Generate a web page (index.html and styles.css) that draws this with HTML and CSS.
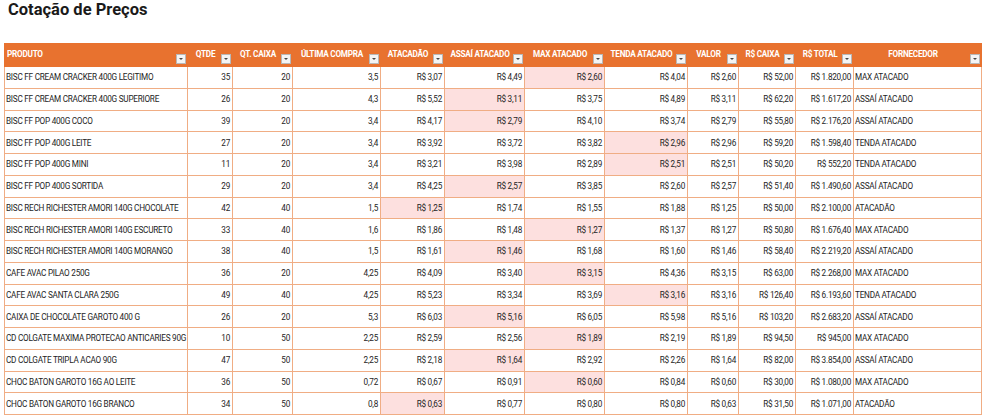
FILE: index.html
```html
<!DOCTYPE html>
<html lang="pt-BR">
<head>
<meta charset="utf-8">
<title>Cotação de Preços</title>
<link rel="stylesheet" href="styles.css">
</head>
<body>
<h1 class="title">Cotação de Preços</h1>
<table class="grid">
<colgroup>
<col style="width:183px"><col style="width:45px"><col style="width:60px"><col style="width:88px"><col style="width:64px"><col style="width:80px"><col style="width:80px"><col style="width:83px"><col style="width:51px"><col style="width:57px"><col style="width:58px"><col style="width:128px">
</colgroup>
<thead>
<tr>
<th class="left"><div class="hc"><span class="ht">PRODUTO</span><span class="dd"></span></div></th>
<th><div class="hc"><span class="ht">QTDE</span><span class="dd"></span></div></th>
<th><div class="hc"><span class="ht">QT. CAIXA</span><span class="dd"></span></div></th>
<th><div class="hc"><span class="ht">ÚLTIMA COMPRA</span><span class="dd"></span></div></th>
<th><div class="hc"><span class="ht">ATACADÃO</span><span class="dd"></span></div></th>
<th><div class="hc"><span class="ht">ASSAÍ ATACADO</span><span class="dd"></span></div></th>
<th><div class="hc"><span class="ht">MAX ATACADO</span><span class="dd"></span></div></th>
<th><div class="hc"><span class="ht">TENDA ATACADO</span><span class="dd"></span></div></th>
<th><div class="hc"><span class="ht">VALOR</span><span class="dd"></span></div></th>
<th><div class="hc"><span class="ht">R$ CAIXA</span><span class="dd"></span></div></th>
<th><div class="hc"><span class="ht">R$ TOTAL</span><span class="dd"></span></div></th>
<th><div class="hc"><span class="ht">FORNECEDOR</span><span class="dd"></span></div></th>
</tr>
</thead>
<tbody>
<tr><td class="t">BISC FF CREAM CRACKER 400G LEGITIMO</td><td>35</td><td>20</td><td>3,5</td><td>R$ 3,07</td><td>R$ 4,49</td><td class="hl">R$ 2,60</td><td>R$ 4,04</td><td>R$ 2,60</td><td>R$ 52,00</td><td>R$ 1.820,00</td><td class="t">MAX ATACADO</td></tr>
<tr><td class="t">BISC FF CREAM CRACKER 400G SUPERIORE</td><td>26</td><td>20</td><td>4,3</td><td>R$ 5,52</td><td class="hl">R$ 3,11</td><td>R$ 3,75</td><td>R$ 4,89</td><td>R$ 3,11</td><td>R$ 62,20</td><td>R$ 1.617,20</td><td class="t">ASSAÍ ATACADO</td></tr>
<tr><td class="t">BISC FF POP 400G COCO</td><td>39</td><td>20</td><td>3,4</td><td>R$ 4,17</td><td class="hl">R$ 2,79</td><td>R$ 4,10</td><td>R$ 3,74</td><td>R$ 2,79</td><td>R$ 55,80</td><td>R$ 2.176,20</td><td class="t">ASSAÍ ATACADO</td></tr>
<tr><td class="t">BISC FF POP 400G LEITE</td><td>27</td><td>20</td><td>3,4</td><td>R$ 3,92</td><td>R$ 3,72</td><td>R$ 3,82</td><td class="hl">R$ 2,96</td><td>R$ 2,96</td><td>R$ 59,20</td><td>R$ 1.598,40</td><td class="t">TENDA ATACADO</td></tr>
<tr><td class="t">BISC FF POP 400G MINI</td><td>11</td><td>20</td><td>3,4</td><td>R$ 3,21</td><td>R$ 3,98</td><td>R$ 2,89</td><td class="hl">R$ 2,51</td><td>R$ 2,51</td><td>R$ 50,20</td><td>R$ 552,20</td><td class="t">TENDA ATACADO</td></tr>
<tr><td class="t">BISC FF POP 400G SORTIDA</td><td>29</td><td>20</td><td>3,4</td><td>R$ 4,25</td><td class="hl">R$ 2,57</td><td>R$ 3,85</td><td>R$ 2,60</td><td>R$ 2,57</td><td>R$ 51,40</td><td>R$ 1.490,60</td><td class="t">ASSAÍ ATACADO</td></tr>
<tr><td class="t">BISC RECH RICHESTER AMORI 140G CHOCOLATE</td><td>42</td><td>40</td><td>1,5</td><td class="hl">R$ 1,25</td><td>R$ 1,74</td><td>R$ 1,55</td><td>R$ 1,88</td><td>R$ 1,25</td><td>R$ 50,00</td><td>R$ 2.100,00</td><td class="t">ATACADÃO</td></tr>
<tr><td class="t">BISC RECH RICHESTER AMORI 140G ESCURETO</td><td>33</td><td>40</td><td>1,6</td><td>R$ 1,86</td><td>R$ 1,48</td><td class="hl">R$ 1,27</td><td>R$ 1,37</td><td>R$ 1,27</td><td>R$ 50,80</td><td>R$ 1.676,40</td><td class="t">MAX ATACADO</td></tr>
<tr><td class="t">BISC RECH RICHESTER AMORI 140G MORANGO</td><td>38</td><td>40</td><td>1,5</td><td>R$ 1,61</td><td class="hl">R$ 1,46</td><td>R$ 1,68</td><td>R$ 1,60</td><td>R$ 1,46</td><td>R$ 58,40</td><td>R$ 2.219,20</td><td class="t">ASSAÍ ATACADO</td></tr>
<tr><td class="t">CAFE AVAC PILAO 250G</td><td>36</td><td>20</td><td>4,25</td><td>R$ 4,09</td><td>R$ 3,40</td><td class="hl">R$ 3,15</td><td>R$ 4,36</td><td>R$ 3,15</td><td>R$ 63,00</td><td>R$ 2.268,00</td><td class="t">MAX ATACADO</td></tr>
<tr><td class="t">CAFE AVAC SANTA CLARA 250G</td><td>49</td><td>40</td><td>4,25</td><td>R$ 5,23</td><td>R$ 3,34</td><td>R$ 3,69</td><td class="hl">R$ 3,16</td><td>R$ 3,16</td><td>R$ 126,40</td><td>R$ 6.193,60</td><td class="t">TENDA ATACADO</td></tr>
<tr><td class="t">CAIXA DE CHOCOLATE GAROTO 400 G</td><td>26</td><td>20</td><td>5,3</td><td>R$ 6,03</td><td class="hl">R$ 5,16</td><td>R$ 6,05</td><td>R$ 5,98</td><td>R$ 5,16</td><td>R$ 103,20</td><td>R$ 2.683,20</td><td class="t">ASSAÍ ATACADO</td></tr>
<tr><td class="t">CD COLGATE MAXIMA PROTECAO ANTICARIES 90G</td><td>10</td><td>50</td><td>2,25</td><td>R$ 2,59</td><td>R$ 2,56</td><td class="hl">R$ 1,89</td><td>R$ 2,19</td><td>R$ 1,89</td><td>R$ 94,50</td><td>R$ 945,00</td><td class="t">MAX ATACADO</td></tr>
<tr><td class="t">CD COLGATE TRIPLA ACAO 90G</td><td>47</td><td>50</td><td>2,25</td><td>R$ 2,18</td><td class="hl">R$ 1,64</td><td>R$ 2,92</td><td>R$ 2,26</td><td>R$ 1,64</td><td>R$ 82,00</td><td>R$ 3.854,00</td><td class="t">ASSAÍ ATACADO</td></tr>
<tr><td class="t">CHOC BATON GAROTO 16G AO LEITE</td><td>36</td><td>50</td><td>0,72</td><td>R$ 0,67</td><td>R$ 0,91</td><td class="hl">R$ 0,60</td><td>R$ 0,84</td><td>R$ 0,60</td><td>R$ 30,00</td><td>R$ 1.080,00</td><td class="t">MAX ATACADO</td></tr>
<tr><td class="t">CHOC BATON GAROTO 16G BRANCO</td><td>34</td><td>50</td><td>0,8</td><td class="hl">R$ 0,63</td><td>R$ 0,77</td><td>R$ 0,80</td><td>R$ 0,80</td><td>R$ 0,63</td><td>R$ 31,50</td><td>R$ 1.071,00</td><td class="t">ATACADÃO</td></tr>
</tbody>
</table>
</body>
</html>
```

FILE: styles.css
```css
html, body {
  margin: 0;
  padding: 0;
  background: #ffffff;
}
body {
  padding: 0 0 0 4px;
  font-family: "Roboto", "Liberation Sans", sans-serif;
  color: #222;
}
.title {
  margin: 0;
  padding: 0 0 0 4px;
  height: 43px;
  box-sizing: border-box;
  font-family: "Roboto", "Liberation Sans", sans-serif;
  font-weight: 700;
  font-size: 16.5px;
  line-height: 20px;
  color: #1a1a1a;
}
.grid {
  border-collapse: collapse;
  table-layout: fixed;
  width: 977px;
  font-size: 8.2px;
  letter-spacing: -0.25px;
}
.grid th {
  background: #e8722f;
  color: #ffffff;
  font-weight: 700;
  height: 22px;
  padding: 0;
  border: 1px solid #e8722f;
  vertical-align: top;
}
.hc {
  display: flex;
  height: 22px;
  padding: 0 1px 0 2px;
}
.ht {
  flex: 1;
  text-align: center;
  padding-top: 5px;
  white-space: nowrap;
  overflow: hidden;
  line-height: 11px;
}
.left .ht {
  text-align: left;
}
.dd {
  align-self: flex-end;
  margin-bottom: 2px;
  width: 8px;
  height: 8px;
  flex: none;
  background: #f4f4f4;
  border: 1px solid #b8b8b8;
  position: relative;
}
.dd::after {
  content: "";
  position: absolute;
  left: 2px;
  top: 3px;
  border-left: 2px solid transparent;
  border-right: 2px solid transparent;
  border-top: 2px solid #444;
}
.grid td {
  height: 20.75px;
  padding: 0 2px 0 2px;
  border: 1px solid #f0ad84;
  text-align: right;
  white-space: nowrap;
  overflow: hidden;
  line-height: 12px;
  color: #1e1e1e;
}
.grid td.t {
  text-align: left;
  padding-left: 1px;
}
.grid td.hl {
  background: #fde0df;
}
```
